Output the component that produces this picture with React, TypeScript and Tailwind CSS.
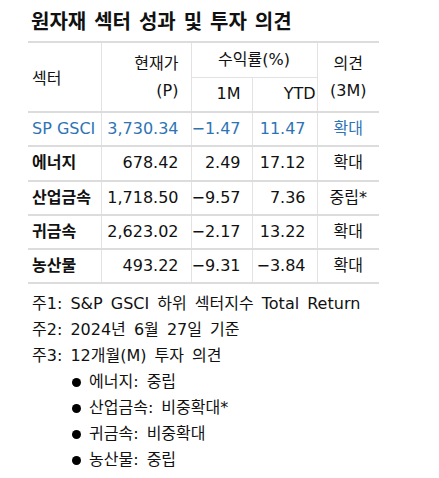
const rows = [
  { name: "SP GSCI", price: "3,730.34", m1: "-1.47", ytd: "11.47", view: "확대", blue: true },
  { name: "에너지", price: "678.42", m1: "2.49", ytd: "17.12", view: "확대" },
  { name: "산업금속", price: "1,718.50", m1: "-9.57", ytd: "7.36", view: "중립*" },
  { name: "귀금속", price: "2,623.02", m1: "-2.17", ytd: "13.22", view: "확대" },
  { name: "농산물", price: "493.22", m1: "-9.31", ytd: "-3.84", view: "확대" },
];

const bullets = ["에너지: 중립", "산업금속: 비중확대*", "귀금속: 비중확대", "농산물: 중립"];

export default function App() {
  return (
    <div
      className="w-[439px] h-[478px] bg-white text-[#111] pt-[8px]"
      style={{ fontFamily: '"DejaVu Sans", "Noto Sans CJK KR", sans-serif' }}
    >
      <h1 className="ml-[31px] text-[20px] font-bold leading-[28px] [word-spacing:1px]">
        원자재 섹터 성과 및 투자 의견
      </h1>
      <table className="ml-[28px] mt-[5px] border-collapse text-[16px] leading-none">
        <colgroup>
          <col className="w-[73px]" />
          <col className="w-[90px]" />
          <col className="w-[61px]" />
          <col className="w-[65px]" />
          <col className="w-[62px]" />
        </colgroup>
        <thead>
          <tr className="h-[35px] border-t-2 border-[#dcdcdc]">
            <th rowSpan={2} className="text-left font-normal pl-[4px] pt-[4px] border-r border-[#e2e2e2] border-b-2 border-b-[#dcdcdc]">
              섹터
            </th>
            <th className="text-right font-normal pr-[12px] pt-[8px] align-middle border-r border-[#e2e2e2]">현재가</th>
            <th colSpan={2} className="text-center font-normal border-r border-[#e2e2e2] border-b border-b-[#e2e2e2]">
              수익률(%)
            </th>
            <th className="text-center font-normal pt-[8px]">의견</th>
          </tr>
          <tr className="h-[35px] border-b-2 border-[#dcdcdc]">
            <th className="text-right font-normal pr-[12px] pb-[6px] border-r border-[#e2e2e2]">(P)</th>
            <th className="text-right font-normal pr-[11px] border-r border-[#e2e2e2]">1M</th>
            <th className="text-right font-normal pr-[1px] border-r border-[#e2e2e2]">YTD</th>
            <th className="text-center font-normal pb-[6px]">(3M)</th>
          </tr>
        </thead>
        <tbody>
          {rows.map((r) => (
            <tr
              key={r.name}
              className={`h-[34.3px] border-b-2 border-[#dcdcdc] ${r.blue ? "text-[#2e74b5]" : "text-[#111]"}`}
            >
              <td className={`pl-[4px] border-r border-[#e2e2e2] whitespace-nowrap ${r.blue ? "" : "font-bold"}`}>
                {r.name}
              </td>
              <td className="text-right pr-[12px] border-r border-[#e2e2e2]">{r.price}</td>
              <td className="text-right pr-[11px] border-r border-[#e2e2e2]">{r.m1.replace("-", "−")}</td>
              <td className="text-right pr-[11px] border-r border-[#e2e2e2]">{r.ytd.replace("-", "−")}</td>
              <td className="text-center">{r.view}</td>
            </tr>
          ))}
        </tbody>
      </table>
      <div className="ml-[32px] mt-[7px] text-[16px] leading-[26px] text-[#111] [word-spacing:3px]">
        <div>주1: S&amp;P GSCI 하위 섹터지수 Total Return</div>
        <div>주2: 2024년 6월 27일 기준</div>
        <div>주3: 12개월(M) 투자 의견</div>
        <ul className="ml-[40px]">
          {bullets.map((b) => (
            <li key={b} className="flex items-center gap-[8px]">
              <span className="w-[9px] h-[9px] rounded-full bg-black inline-block" />
              <span>{b}</span>
            </li>
          ))}
        </ul>
      </div>
    </div>
  );
}
